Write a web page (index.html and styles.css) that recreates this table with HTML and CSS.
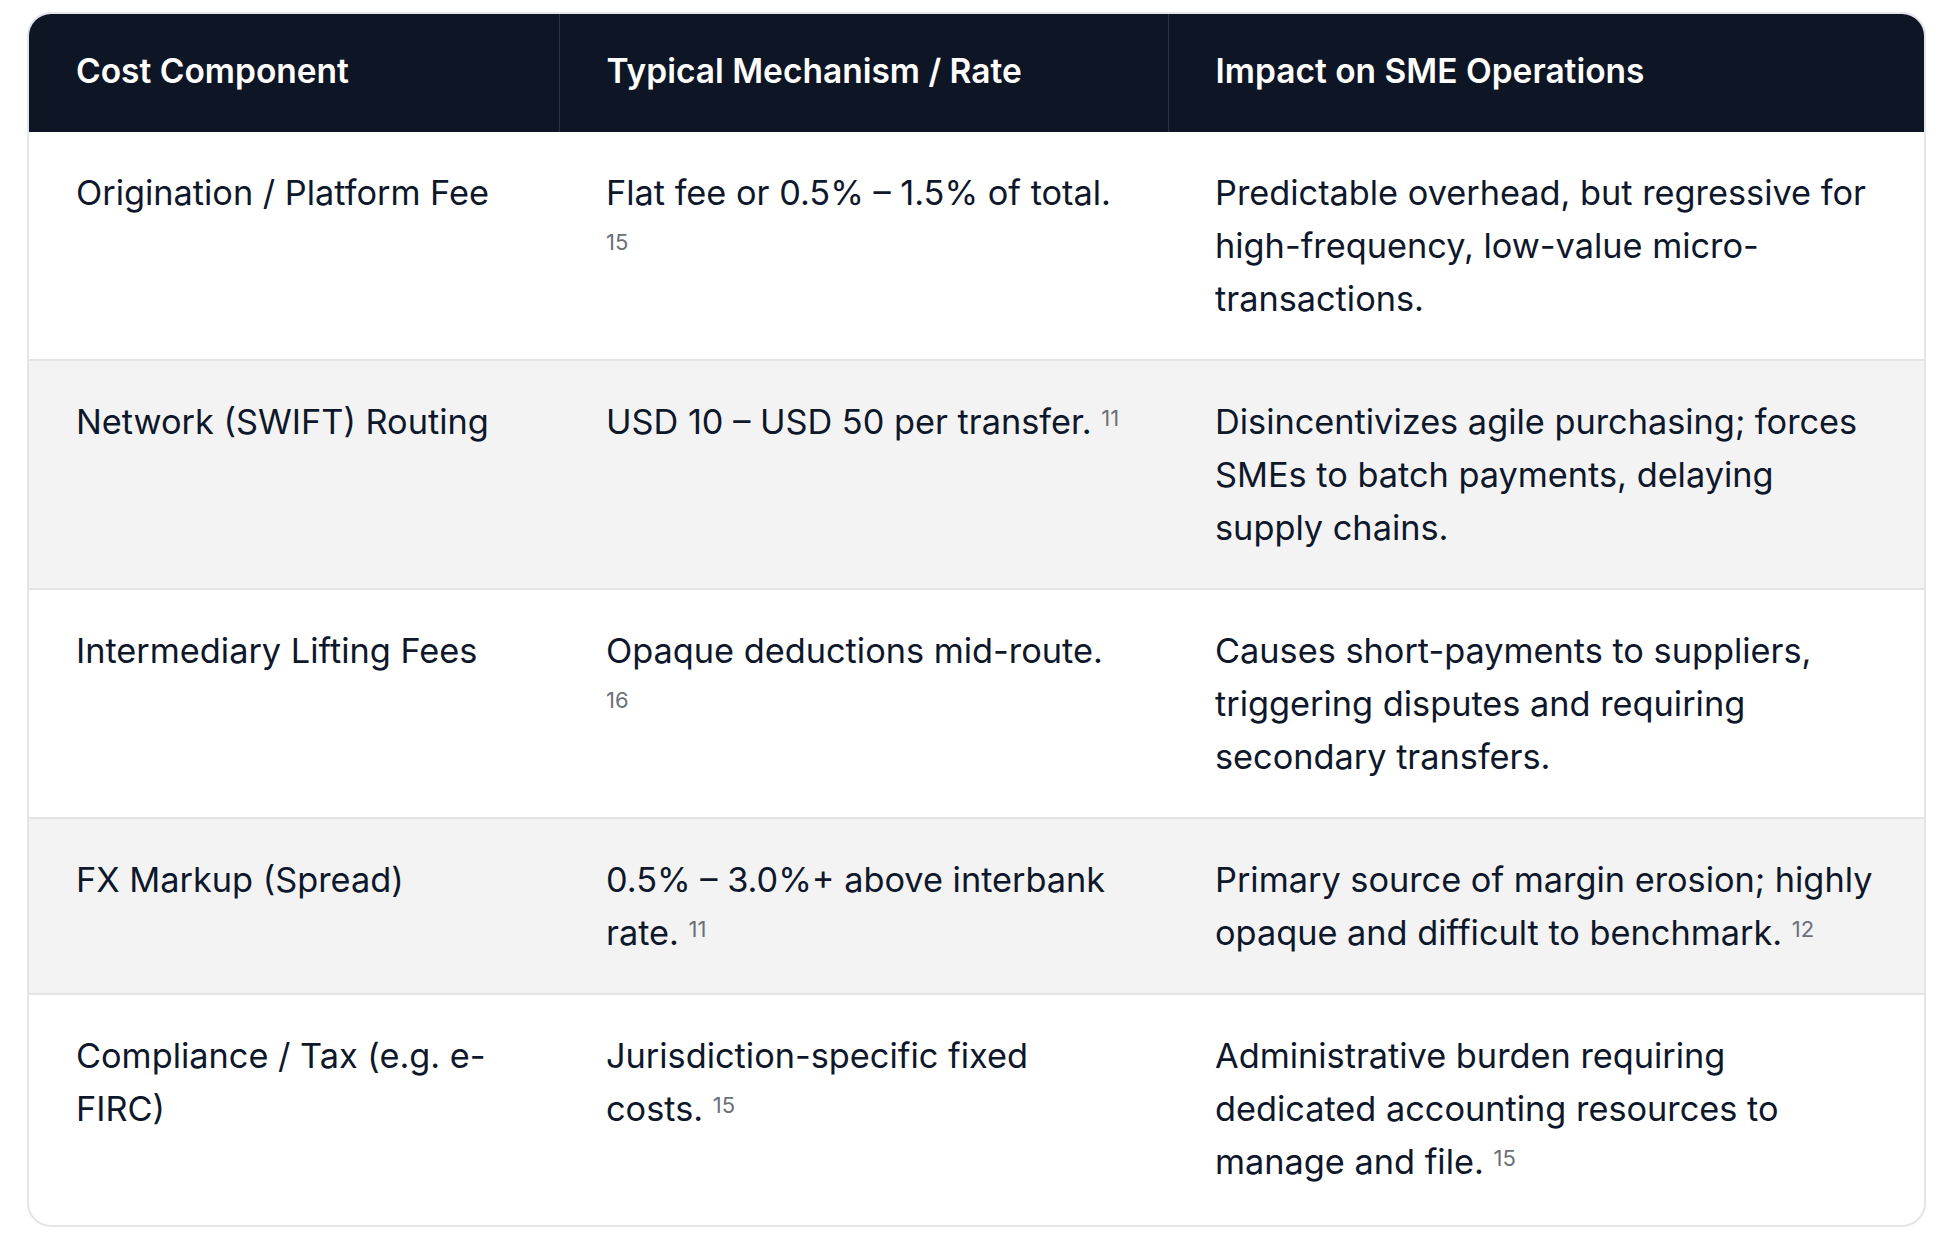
FILE: index.html
```html
<!DOCTYPE html>
<html lang="en">
<head>
<meta charset="utf-8">
<title>Cost Components</title>
<link rel="stylesheet" href="styles.css">
</head>
<body>
<div class="page">
  <div class="table-wrap">
    <table class="cost-table">
      <thead>
        <tr>
          <th class="col-a">Cost Component</th>
          <th class="col-b">Typical Mechanism / Rate</th>
          <th class="col-c">Impact on SME Operations</th>
        </tr>
      </thead>
      <tbody>
        <tr>
          <td>Origination / Platform Fee</td>
          <td>Flat fee or 0.5% – 1.5% of total. <sup class="cite">15</sup></td>
          <td>Predictable overhead, but regressive for high-frequency, low-value micro-transactions.</td>
        </tr>
        <tr>
          <td>Network (SWIFT) Routing</td>
          <td>USD 10 – USD 50 per transfer. <sup class="cite">11</sup></td>
          <td>Disincentivizes agile purchasing; forces SMEs to batch payments, delaying supply chains.</td>
        </tr>
        <tr>
          <td>Intermediary Lifting Fees</td>
          <td>Opaque deductions mid-route. <sup class="cite">16</sup></td>
          <td>Causes short-payments to suppliers, triggering disputes and requiring secondary transfers.</td>
        </tr>
        <tr>
          <td>FX Markup (Spread)</td>
          <td>0.5% – 3.0%+ above interbank rate. <sup class="cite">11</sup></td>
          <td>Primary source of margin erosion; highly opaque and difficult to benchmark. <sup class="cite">12</sup></td>
        </tr>
        <tr>
          <td>Compliance / Tax (e.g. e-FIRC)</td>
          <td>Jurisdiction-specific fixed costs. <sup class="cite">15</sup></td>
          <td>Administrative burden requiring dedicated accounting resources to manage and file. <sup class="cite">15</sup></td>
        </tr>
      </tbody>
    </table>
  </div>
</div>
</body>
</html>
```
FILE: styles.css
```css
html, body {
  margin: 0;
  padding: 0;
  background: #ffffff;
}

.page {
  padding: 12px 22px 0 27px;
  font-family: Inter, "Noto Sans", sans-serif;
}

.table-wrap {
  border: 2px solid #e4e5e8;
  border-radius: 24px;
  overflow: hidden;
}

.cost-table {
  width: 100%;
  border-collapse: collapse;
  table-layout: fixed;
}

.cost-table th,
.cost-table td {
  box-sizing: border-box;
}

.cost-table th {
  background: #0e1525;
  color: #ffffff;
  font-size: 33.5px;
  font-weight: 600;
  line-height: 53px;
  text-align: left;
  padding: 31px 47px 34px 47px;
  vertical-align: top;
}

.cost-table th.col-a {
  width: 530px;
  border-right: 1px solid #2b3242;
}

.cost-table th.col-b {
  width: 609px;
  border-right: 1px solid #2b3242;
}

.cost-table td {
  color: #0f172a;
  font-size: 34.3px;
  font-weight: 400;
  line-height: 53px;
  padding: 34px 47px 34px 47px;
  vertical-align: top;
  border-bottom: 2px solid #e4e4e4;
}

.cost-table tbody tr:nth-child(even) td {
  background: #f3f3f3;
}

.cost-table tbody tr:last-child td {
  border-bottom: none;
  padding-bottom: 37px;
}

.cite {
  display: inline-block;
  font-size: 22px;
  line-height: 22px;
  vertical-align: 8px;
  color: #6b7078;
  font-weight: 400;
}
```
